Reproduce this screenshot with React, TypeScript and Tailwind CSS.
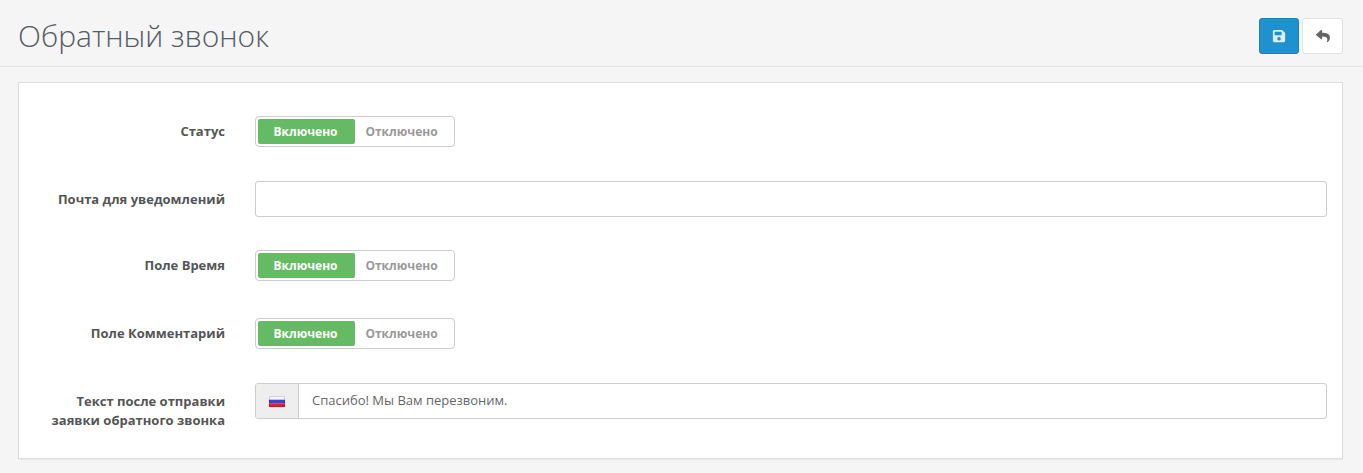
import { FaSave, FaReply } from "react-icons/fa";

function Toggle() {
  return (
    <div className="flex h-[31px] w-[200px] items-center rounded-[4px] border border-[#cccccc] bg-white p-[2px] text-[12px] font-bold leading-none">
      <span className="flex h-[25px] w-[97px] items-center justify-center rounded-[2px] bg-[#65bb63] pr-[2px] text-white">Включено</span>
      <span className="flex h-[25px] w-[97px] items-center justify-center pr-[4px] text-[#999999]">Отключено</span>
    </div>
  );
}

function Row({ label, pt, h, mb, children }: { label: React.ReactNode; pt: string; h: string; mb: string; children: React.ReactNode }) {
  return (
    <div className={`flex ${h} ${mb} items-start`}>
      <label className={`w-[206px] shrink-0 ${pt} text-right text-[13px] font-bold leading-[19px] text-[#555555]`}>{label}</label>
      <div className="ml-[30px] min-w-0 flex-1">{children}</div>
    </div>
  );
}

export default function App() {
  return (
    <div className="h-[473px] overflow-hidden bg-[#f5f5f5] font-['Open_Sans',sans-serif]">
      <div className="flex h-[67px] items-start justify-between border-b border-[#e5e5e5] pl-[18px] pr-[20px] pt-[18px]">
        <h1 className="pt-[2px] text-[30px] font-light leading-[32px] text-[#555a64]">Обратный звонок</h1>
        <div className="flex gap-[3px]">
          <button className="flex h-[36px] w-[40px] items-center justify-center rounded-[3px] border border-[#1a80b6] bg-[#1e91cf] text-[14px] text-[#d9eef9]"><FaSave /></button>
          <button className="flex h-[36px] w-[41px] items-center justify-center rounded-[3px] border border-[#e2e2e2] bg-white text-[14px] text-[#666666]"><FaReply /></button>
        </div>
      </div>
      <div className="ml-[18px] mr-[20px] mt-[15px] h-[377px] border border-[#dddddd] bg-white pr-[15px] pt-[33px] shadow-[0_1px_1px_rgba(0,0,0,0.05)]">
        <Row label="Статус" pt="pt-[6px]" h="h-[31px]" mb="mb-[34px]"><Toggle /></Row>
        <Row label="Почта для уведомлений" pt="pt-[9px]" h="h-[36px]" mb="mb-[33px]"><input className="block h-[36px] w-full rounded-[3px] border border-[#cccccc] bg-white" /></Row>
        <Row label="Поле Время" pt="pt-[6px]" h="h-[31px]" mb="mb-[37px]"><Toggle /></Row>
        <Row label="Поле Комментарий" pt="pt-[6px]" h="h-[31px]" mb="mb-[34px]"><Toggle /></Row>
        <Row label={<>Текст после отправки<br />заявки обратного звонка</>} pt="pt-[9px]" h="h-[36px]" mb="mb-0">
          <div className="flex h-[36px] rounded-[3px] border border-[#cccccc]">
            <span className="flex w-[43px] shrink-0 items-center justify-center rounded-l-[3px] border-r border-[#cccccc] bg-[#eeeeee]">
              <svg width="16" height="11" viewBox="0 0 16 11">
                <rect width="16" height="11" fill="#f6f6fa" />
                <rect y="3.7" width="16" height="3.6" fill="#3a45c8" />
                <rect y="7.3" width="16" height="3.7" fill="#e02030" />
                <rect x="0.5" y="0.5" width="15" height="10" fill="none" stroke="#000000" strokeOpacity="0.15" />
              </svg>
            </span>
            <span className="flex items-center pl-[13px] text-[13px] text-[#666666]">Спасибо! Мы Вам перезвоним.</span>
          </div>
        </Row>
      </div>
    </div>
  );
}
